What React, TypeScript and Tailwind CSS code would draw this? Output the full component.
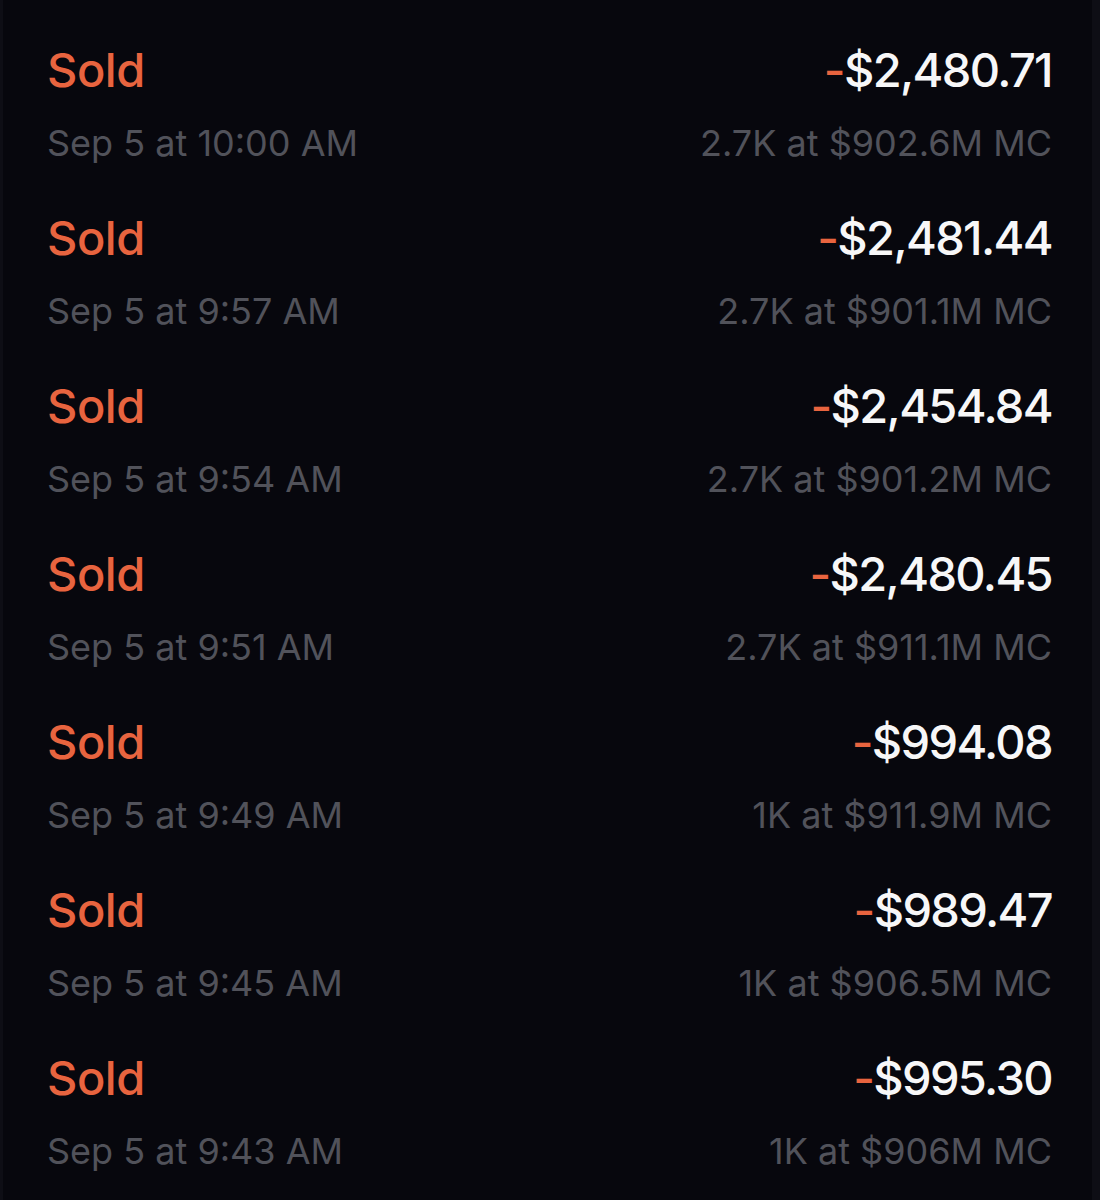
import React from 'react';

const trades = [
  { amount: '$2,480.71', time: 'Sep 5 at 10:00 AM', detail: '2.7K at $902.6M MC' },
  { amount: '$2,481.44', time: 'Sep 5 at 9:57 AM', detail: '2.7K at $901.1M MC' },
  { amount: '$2,454.84', time: 'Sep 5 at 9:54 AM', detail: '2.7K at $901.2M MC' },
  { amount: '$2,480.45', time: 'Sep 5 at 9:51 AM', detail: '2.7K at $911.1M MC' },
  { amount: '$994.08', time: 'Sep 5 at 9:49 AM', detail: '1K at $911.9M MC' },
  { amount: '$989.47', time: 'Sep 5 at 9:45 AM', detail: '1K at $906.5M MC' },
  { amount: '$995.30', time: 'Sep 5 at 9:43 AM', detail: '1K at $906M MC' },
];

export default function App() {
  return (
    <div className="w-[1100px] h-[1200px] overflow-hidden bg-[#07070d] border-l-[3px] border-r-[8px] border-[#0e0e15] font-['Inter',sans-serif]">
      <div className="pt-[46px] pl-[44px] pr-[40px]">
        {trades.map((t, i) => (
          <div key={i} className="flex flex-col gap-[32px] pb-[52px]">
            <div className="flex justify-between items-baseline text-[47px] leading-[47px] font-medium">
              <span className="text-[#e8643f] tracking-[-0.01em]">Sold</span>
              <span className="text-[#f7f7f8] tracking-[-0.035em]">
                <span className="text-[#e8643f]">-</span>
                {t.amount}
              </span>
            </div>
            <div className="flex justify-between text-[36px] leading-[37px] tracking-normal text-[#51525a]">
              <span>{t.time}</span>
              <span>{t.detail}</span>
            </div>
          </div>
        ))}
      </div>
    </div>
  );
}
